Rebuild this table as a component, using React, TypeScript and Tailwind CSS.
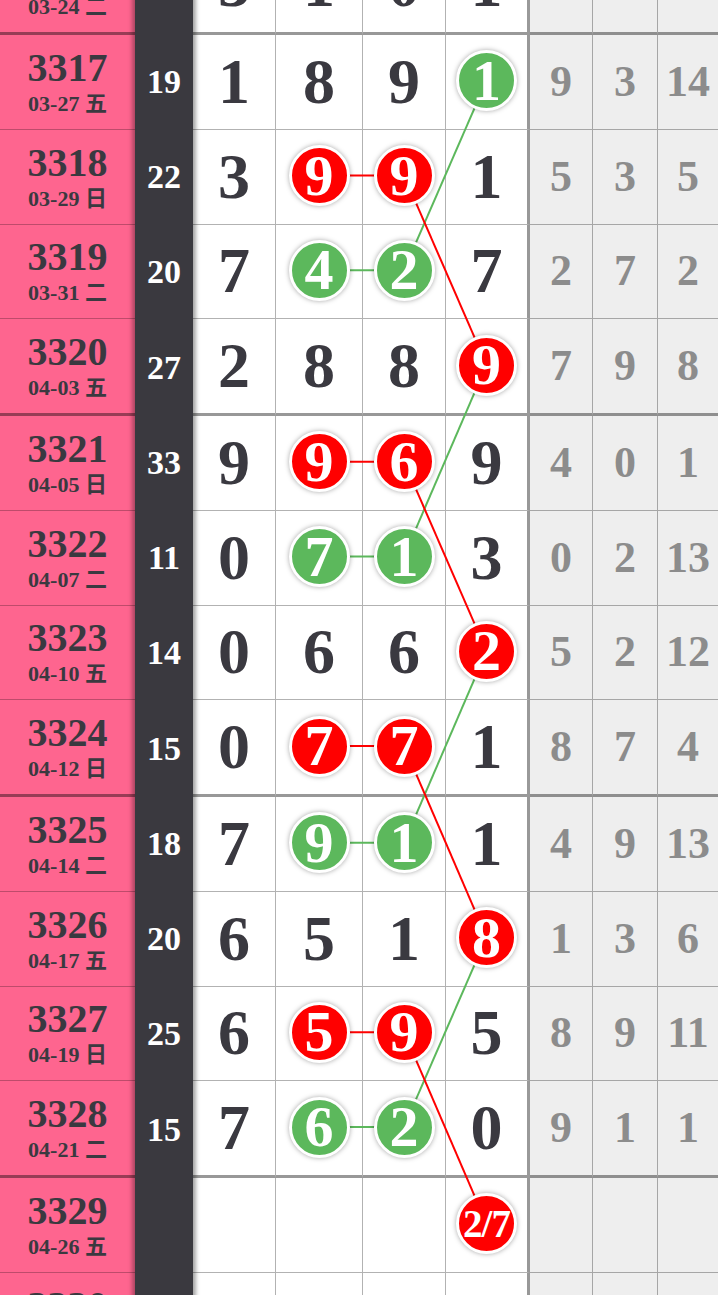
const rows = [
  { p: "3316", d: "03-24 二", s: "", n: ["3", "1", "0", "1"], g: ["1", "5", ""] },
  { p: "3317", d: "03-27 五", s: "19", n: ["1", "8", "9", "g1"], g: ["9", "3", "14"] },
  { p: "3318", d: "03-29 日", s: "22", n: ["3", "r9", "r9", "1"], g: ["5", "3", "5"] },
  { p: "3319", d: "03-31 二", s: "20", n: ["7", "g4", "g2", "7"], g: ["2", "7", "2"] },
  { p: "3320", d: "04-03 五", s: "27", n: ["2", "8", "8", "r9"], g: ["7", "9", "8"] },
  { p: "3321", d: "04-05 日", s: "33", n: ["9", "r9", "r6", "9"], g: ["4", "0", "1"] },
  { p: "3322", d: "04-07 二", s: "11", n: ["0", "g7", "g1", "3"], g: ["0", "2", "13"] },
  { p: "3323", d: "04-10 五", s: "14", n: ["0", "6", "6", "r2"], g: ["5", "2", "12"] },
  { p: "3324", d: "04-12 日", s: "15", n: ["0", "r7", "r7", "1"], g: ["8", "7", "4"] },
  { p: "3325", d: "04-14 二", s: "18", n: ["7", "g9", "g1", "1"], g: ["4", "9", "13"] },
  { p: "3326", d: "04-17 五", s: "20", n: ["6", "5", "1", "r8"], g: ["1", "3", "6"] },
  { p: "3327", d: "04-19 日", s: "25", n: ["6", "r5", "r9", "5"], g: ["8", "9", "11"] },
  { p: "3328", d: "04-21 二", s: "15", n: ["7", "g6", "g2", "0"], g: ["9", "1", "1"] },
  { p: "3329", d: "04-26 五", s: "", n: ["", "", "", "r2/7"], g: ["", "", ""] },
  { p: "3330", d: "04-28 日", s: "", n: ["", "", "", ""], g: ["", "", ""] },
]

// every 4th period closes a group with a thick rule
const isThick = (p: string) => ["3316", "3320", "3324", "3328"].includes(p)

const THIN = 94.75
const THICK = 96.75

// row centres inside the table, for the trend lines
const centres: number[] = []
{
  let top = 0
  rows.forEach((r) => {
    const h = isThick(r.p) ? THICK : THIN
    const b = isThick(r.p) ? 3 : 1
    centres.push(top + (h - b) / 2 - 1)
    top += h
  })
}
const colX = [41, 126, 211, 293.5]

const GREEN = "#5cb85c"
const RED = "#ff0000"

const segments: [number, number, number, number, string][] = [
  [1, 3, 3, 2, GREEN],
  [2, 2, 4, 3, RED],
  [4, 3, 6, 2, GREEN],
  [5, 2, 7, 3, RED],
  [7, 3, 9, 2, GREEN],
  [8, 2, 10, 3, RED],
  [10, 3, 12, 2, GREEN],
  [11, 2, 13, 3, RED],
]

function Ball({ v }: { v: string }) {
  const red = v[0] === "r"
  const txt = v.slice(1)
  return (
    <div
      className={
        "relative z-10 flex h-[61px] w-[61px] -translate-y-[1px] items-center justify-center rounded-full border-[3px] border-white leading-none text-white shadow-[0_0_5px_rgba(0,0,0,0.35)] " +
        (red ? "bg-[#ff0000]" : "bg-[#5cb85c]")
      }
    >
      {txt.length > 1 ? (
        <span className="text-[39px] tracking-[-1px]">{txt}</span>
      ) : (
        <span className="text-[58px]">{txt}</span>
      )}
    </div>
  )
}

function NumCell({ v, className }: { v: string; className: string }) {
  const ball = v[0] === "r" || v[0] === "g"
  return (
    <div className={"flex items-center justify-center " + className}>
      {ball ? <Ball v={v} /> : <span className="text-[64px] leading-none text-[#3a3940]">{v}</span>}
    </div>
  )
}

export default function App() {
  return (
    <div className="h-[1295px] w-[718px] overflow-hidden bg-white font-['Liberation_Serif','Noto_Sans_CJK_SC',serif] font-bold">
      <div className="-mt-[61.75px] flex">
        {/* period column */}
        <div className="flex w-[135px] flex-col bg-[#fe658f] text-[#3a3940]">
          {rows.map((r) => (
            <div
              key={r.p}
              className={
                "flex flex-col items-center justify-center " +
                (isThick(r.p)
                  ? "h-[96.75px] border-b-[3px] border-[rgba(0,0,0,0.4)]"
                  : "h-[94.75px] border-b border-[rgba(0,0,0,0.25)]")
              }
            >
              <div className="text-[40px] leading-[40px]">{r.p}</div>
              <div className="mt-1 text-[22px] leading-[24px]">{r.d}</div>
            </div>
          ))}
        </div>

        {/* sum column */}
        <div className="relative z-20 flex w-[58px] flex-col bg-[#3a393f] text-white shadow-[3px_0_4px_rgba(0,0,0,0.35),-3px_0_4px_rgba(0,0,0,0.3)]">
          {rows.map((r) => (
            <div
              key={r.p}
              className={
                "flex items-center justify-center text-[34px] leading-none " +
                (isThick(r.p) ? "h-[96.75px]" : "h-[94.75px]")
              }
            >
              {r.s}
            </div>
          ))}
        </div>

        {/* numbers */}
        <div className="relative flex-1">
          <svg className="absolute left-0 top-0" width="525" height="1400">
            {rows.map((r, i) =>
              r.n[1].length > 1 && r.n[2].length > 1 ? (
                <line
                  key={"h" + r.p}
                  x1={colX[1]}
                  y1={centres[i]}
                  x2={colX[2]}
                  y2={centres[i]}
                  stroke={r.n[1][0] === "r" ? RED : GREEN}
                  strokeWidth="2"
                />
              ) : null
            )}
            {segments.map(([r1, c1, r2, c2, col], i) => (
              <line
                key={i}
                x1={colX[c1]}
                y1={centres[r1]}
                x2={colX[c2]}
                y2={centres[r2]}
                stroke={col}
                strokeWidth="2"
              />
            ))}
          </svg>

          {rows.map((r) => {
            const b = isThick(r.p)
              ? "border-b-[3px] border-b-[rgba(0,0,0,0.4)]"
              : "border-b border-b-[rgba(0,0,0,0.3)]"
            return (
              <div key={r.p} className={"flex " + (isThick(r.p) ? "h-[96.75px]" : "h-[94.75px]")}>
                <NumCell v={r.n[0]} className={"w-[83px] border-r border-r-[rgba(0,0,0,0.3)] " + b} />
                <NumCell v={r.n[1]} className={"w-[87px] border-r border-r-[rgba(0,0,0,0.3)] " + b} />
                <NumCell v={r.n[2]} className={"w-[83px] border-r border-r-[rgba(0,0,0,0.3)] " + b} />
                <NumCell v={r.n[3]} className={"w-[84px] border-r-[3px] border-r-[rgba(0,0,0,0.4)] " + b} />
                <div className={"flex w-[63px] items-center justify-center border-r border-r-[rgba(0,0,0,0.3)] bg-[#eeeeee] text-[44px] leading-none text-[#8c8c8c] " + b}>
                  {r.g[0]}
                </div>
                <div className={"flex w-[65px] items-center justify-center border-r border-r-[rgba(0,0,0,0.3)] bg-[#eeeeee] text-[44px] leading-none text-[#8c8c8c] " + b}>
                  {r.g[1]}
                </div>
                <div className={"flex flex-1 items-center justify-center bg-[#eeeeee] text-[44px] leading-none text-[#8c8c8c] " + b}>
                  {r.g[2]}
                </div>
              </div>
            )
          })}
        </div>
      </div>
    </div>
  )
}
